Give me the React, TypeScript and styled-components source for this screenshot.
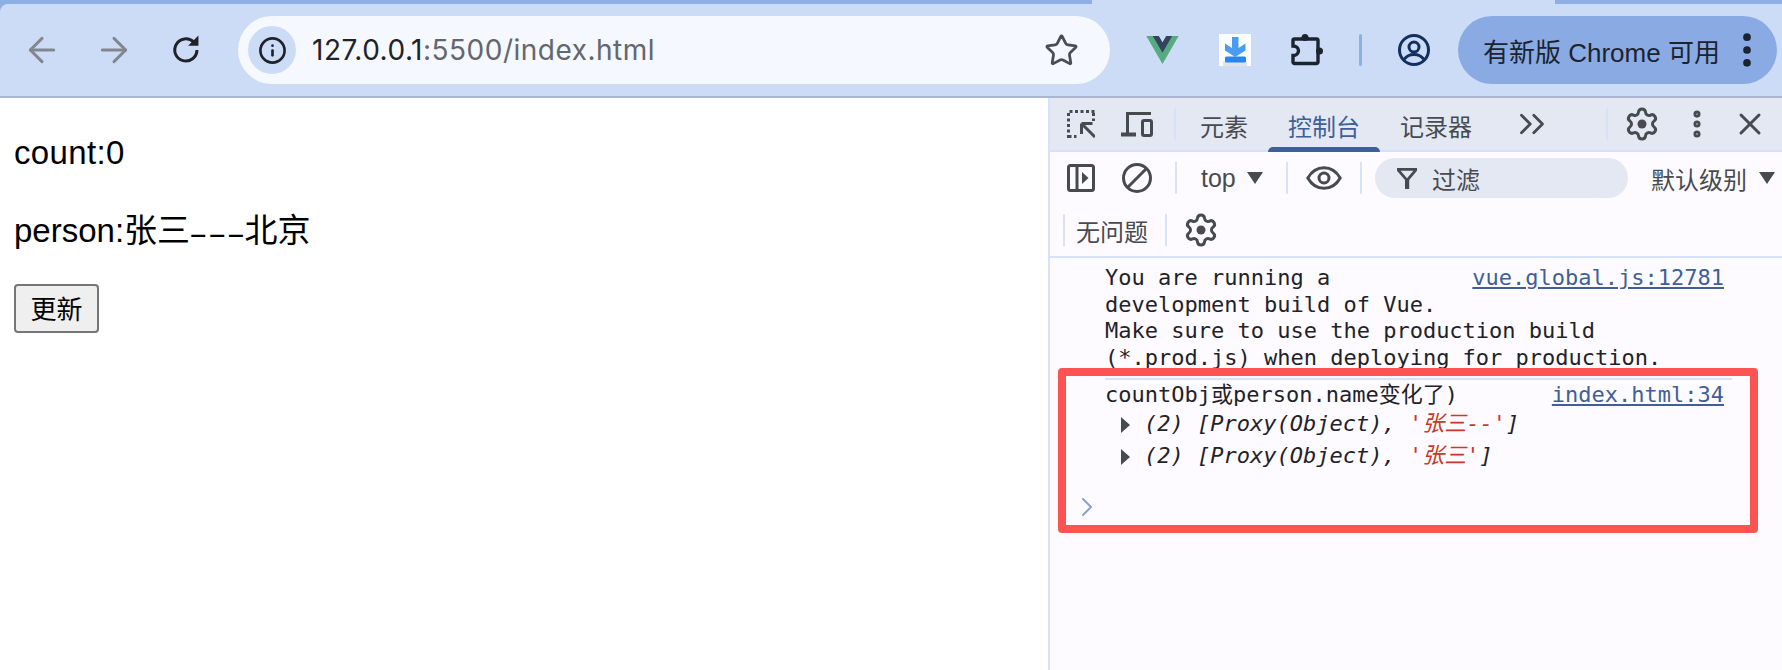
import React from "react";
import styled, { createGlobalStyle } from "styled-components";
import { ArrowLeft, ArrowRight, Star, Info, X, ChevronsRight, ChevronRight, EllipsisVertical } from "lucide-react";

const CJK = `"Noto Sans CJK SC"`;
const UI = `"Liberation Sans", ${CJK}, sans-serif`;
const MONO = `"DejaVu Sans Mono", ${CJK}, monospace`;

const Global = createGlobalStyle`
  html, body { margin: 0; padding: 0; background: #fff; }
  body { width: 1782px; height: 670px; overflow: hidden; font-family: ${UI}; }
  p { margin: 0; }
`;

const Page = styled.div`
  width: 1782px;
  height: 670px;
  display: flex;
  flex-direction: column;
`;
const Chrome = styled.div`
  background: #8eaee6;
  flex: none;
`;
const TabStrip = styled.div`
  height: 4px;
  display: flex;
  justify-content: space-between;
  background: linear-gradient(#cddcf6, #cddcf6) no-repeat 1092px 0 / 463px 4px;
`;
const StripPiece = styled.div<{ $w: number; $side: "l" | "r" }>`
  width: ${(p) => p.$w}px;
  background: #8eaee6;
  border-radius: ${(p) => (p.$side === "l" ? "0 0 6px 0" : "0 0 0 6px")};
`;
const Toolbar = styled.div`
  height: 94px;
  box-sizing: border-box;
  display: flex;
  align-items: center;
  background: #cddcf6;
  border-bottom: 2px solid #a9b6d0;
  border-radius: 8px 0 0 0;
  padding-left: 6px;
`;
const NavSlot = styled.div<{ $w?: number; $c?: string }>`
  width: ${(p) => p.$w ?? 72}px;
  height: 68px;
  flex: none;
  display: flex;
  align-items: center;
  justify-content: center;
  color: ${(p) => p.$c ?? "#1f2329"};
`;
const AddressBar = styled.div`
  width: 872px;
  height: 68px;
  margin-left: 16px;
  flex: none;
  box-sizing: border-box;
  padding: 0 31px 0 10px;
  display: flex;
  align-items: center;
  background: #f5f8fe;
  border-radius: 34px;
`;
const InfoChip = styled.div`
  width: 48px;
  height: 48px;
  border-radius: 50%;
  background: #cddcf6;
  display: flex;
  align-items: center;
  justify-content: center;
  color: #1f2329;
  flex: none;
`;
const Url = styled.div`
  margin-left: 16px;
  flex: 1;
  font-family: "Inter", "Liberation Sans", sans-serif;
  font-size: 28px;
  letter-spacing: 0.5px;
  color: #63676d;
  white-space: nowrap;
`;
const UrlHost = styled.span`
  color: #1f2329;
`;
const StarIcon = styled(Star)`
  color: #4a4d52;
  flex: none;
`;
const ToolbarDivider = styled.div`
  width: 3px;
  height: 32px;
  margin: 0 36px 0 16px;
  background: #8eaee6;
  border-radius: 2px;
  flex: none;
`;
const UpdatePill = styled.div`
  margin-left: 28px;
  width: 319px;
  height: 68px;
  flex: none;
  box-sizing: border-box;
  padding: 0 8px 0 25px;
  display: flex;
  align-items: center;
  justify-content: space-between;
  background: #8aaae4;
  border-radius: 34px;
  color: #1b2330;
  font-size: 26px;
  white-space: nowrap;
`;
const PillDots = styled(EllipsisVertical)`
  color: #1b2330;
  flex: none;
`;

const Body = styled.div`
  flex: 1;
  display: flex;
  min-height: 0;
`;
const Viewport = styled.div`
  width: 1048px;
  flex: none;
  box-sizing: border-box;
  padding: 35px 14px 0;
  display: flex;
  flex-direction: column;
  align-items: flex-start;
  color: #000;
  font-size: 33px;
`;
const Para = styled.p<{ $ls?: number }>`
  height: 40px;
  line-height: 40px;
  margin-bottom: 38px;
  white-space: nowrap;
  letter-spacing: ${(p) => p.$ls ?? 0}px;
`;
const Dashes = styled.span`
  display: inline-block;
  height: 40px;
  vertical-align: top;
  font-family: ${CJK}, sans-serif;
  margin: 0 10px;
  transform: scaleX(1.65);
`;
const PageButton = styled.button`
  width: 85px;
  height: 49px;
  margin-top: -5px;
  padding: 0 0 2px;
  box-sizing: border-box;
  background: #efefef;
  border: 2px solid #767676;
  border-radius: 4px;
  color: #000;
  font-family: ${UI};
  font-size: 26px;
`;

const DevTools = styled.div`
  position: relative;
  flex: 1;
  display: flex;
  flex-direction: column;
  background: #fdfbff;
  border-left: 2px solid #d5e2fa;
  color: #474b50;
`;
const TabsBar = styled.div`
  height: 52px;
  flex: none;
  display: flex;
  align-items: center;
  padding-left: 3px;
  background: #e4e8f2;
  border-bottom: 2px solid #d5e2fa;
`;
const Slot = styled.div<{ $w?: number }>`
  width: ${(p) => p.$w ?? 56}px;
  height: 100%;
  flex: none;
  display: flex;
  align-items: center;
  justify-content: center;
  color: #474b50;
`;
const Divider = styled.div<{ $ml?: number; $mr?: number }>`
  width: 2px;
  height: 32px;
  flex: none;
  background: #d5e2fa;
  margin-left: ${(p) => p.$ml ?? 0}px;
  margin-right: ${(p) => p.$mr ?? 0}px;
`;
const Tab = styled.div<{ $active?: boolean }>`
  position: relative;
  height: 100%;
  flex: none;
  box-sizing: border-box;
  padding: 3px 20px 0;
  display: flex;
  align-items: center;
  font-size: 24px;
  color: ${(p) => (p.$active ? "#3f5f98" : "#474b50")};
  &::after {
    content: "";
    display: ${(p) => (p.$active ? "block" : "none")};
    position: absolute;
    left: 0;
    right: 0;
    bottom: -2px;
    height: 5px;
    background: #3f5f98;
    border-radius: 5px 5px 0 0;
  }
`;
const Row = styled.div`
  height: 52px;
  flex: none;
  display: flex;
  align-items: center;
  padding-left: 3px;
`;
const IssueRow = styled(Row)`
  padding-left: 13px;
  border-bottom: 2px solid #d5e2fa;
`;
const ContextLabel = styled.div`
  width: 84px;
  margin-left: 24px;
  font-size: 25px;
  display: flex;
  align-items: center;
  flex: none;
`;
const Caret = styled.span<{ $ml: number }>`
  width: 0;
  height: 0;
  flex: none;
  margin-left: ${(p) => p.$ml}px;
  border-left: 8px solid transparent;
  border-right: 8px solid transparent;
  border-top: 12px solid #474b50;
`;
const FilterBox = styled.div`
  width: 253px;
  height: 40px;
  flex: none;
  margin-left: 13px;
  box-sizing: border-box;
  padding-left: 22px;
  display: flex;
  align-items: center;
  background: #e4e8f2;
  border-radius: 20px;
  font-size: 24px;
`;
const FilterText = styled.span`
  margin-left: 15px;
`;
const LevelLabel = styled.div`
  margin-left: 23px;
  font-size: 24px;
  white-space: nowrap;
  flex: none;
  display: flex;
  align-items: center;
`;
const IssueText = styled.div`
  width: 100px;
  flex: none;
  padding-left: 11px;
  box-sizing: border-box;
  font-size: 24px;
`;

const Messages = styled.div`
  flex: 1;
  display: flex;
  flex-direction: column;
  padding-left: 55px;
  font-family: ${MONO};
  font-size: 22px;
  line-height: 26.5px;
  color: #1f2329;
`;
const Message = styled.div`
  margin-right: 50px;
  padding: 7px 8px 0 0;
`;
const LogMessage = styled(Message)`
  margin-top: 7px;
  padding-top: 2px;
  border-top: 2px solid #d5e2fa;
`;
const SourceLink = styled.a`
  float: right;
  color: #3f5f98;
  text-decoration: underline;
`;
const TreeLine = styled.div<{ $mt: number }>`
  display: flex;
  align-items: center;
  height: 26px;
  margin-top: ${(p) => p.$mt}px;
  padding-left: 16px;
  font-style: italic;
  white-space: nowrap;
`;
const Disclosure = styled.span`
  width: 0;
  height: 0;
  margin-right: 14px;
  border-top: 8px solid transparent;
  border-bottom: 8px solid transparent;
  border-left: 9px solid #474b50;
  flex: none;
`;
const Str = styled.span`
  color: #c8382b;
`;
const Prompt = styled.div`
  margin: 21px 0 0 -34px;
  height: 32px;
  color: #8aa0cf;
  display: flex;
  align-items: center;
`;
const Highlight = styled.div`
  position: absolute;
  left: 8px;
  top: 270px;
  width: 700px;
  height: 165px;
  box-sizing: border-box;
  border: 8px solid #fd5353;
  border-radius: 4px;
  pointer-events: none;
`;

const Gear = () => (
  <svg width="36" height="36" viewBox="0 0 24 24" fill="none" stroke="#474b50" strokeWidth="2" strokeLinecap="round" strokeLinejoin="round">
    <path d="M9.67 4.14a2.34 2.34 0 0 1 4.66 0 2.34 2.34 0 0 0 3.32 1.91 2.34 2.34 0 0 1 2.33 4.04 2.34 2.34 0 0 0 0 3.82 2.34 2.34 0 0 1-2.33 4.04 2.34 2.34 0 0 0-3.32 1.91 2.34 2.34 0 0 1-4.66 0 2.34 2.34 0 0 0-3.32-1.91 2.34 2.34 0 0 1-2.33-4.04 2.34 2.34 0 0 0 0-3.82 2.34 2.34 0 0 1 2.33-4.04 2.34 2.34 0 0 0 3.32-1.91z" />
    <circle cx="12" cy="12" r="3" fill="#474b50" stroke="none" />
  </svg>
);

const Reload = () => (
  <svg width="36" height="36" viewBox="0 0 24 24" fill="none">
    <path d="M19.300 12a7.400 7.400 0 1 1-2.200-5.300" stroke="#1f2329" strokeWidth="2" />
    <path d="M13.400 9.200H20.300V2.300z" fill="#1f2329" />
  </svg>
);

const Inspect = () => (
  <svg width="28" height="28" viewBox="0 0 28 28" fill="none" stroke="#474b50" strokeWidth="3">
    <path d="M1.500 28V1.500H28" strokeDasharray="3 2.500" />
    <path d="M26.500 3v8" strokeDasharray="3 2.500" />
    <path d="M1.500 26.500h8" strokeDasharray="3 2.500" />
    <path d="M14.500 13.500h11M14.500 13.500v10.500M15 14L28 27" fill="none" />
  </svg>
);

const Device = () => (
  <svg width="32" height="25" viewBox="0 0 32 25" fill="none" stroke="#474b50" strokeWidth="3">
    <path d="M6.500 23V1.500H30" />
    <path d="M0 22.500h15" strokeWidth="4" />
    <rect x="21.500" y="8.500" width="9" height="15" rx="1.500" />
  </svg>
);

const SidebarToggle = () => (
  <svg width="28" height="28" viewBox="0 0 28 28" fill="none">
    <rect x="1.500" y="1.500" width="25" height="25" rx="2" stroke="#474b50" strokeWidth="3" />
    <path d="M10 2v24" stroke="#474b50" strokeWidth="3" />
    <path d="M15 8l6.500 6-6.500 6z" fill="#474b50" />
  </svg>
);

const Ban = () => (
  <svg width="30" height="30" viewBox="0 0 30 30" fill="none" stroke="#474b50" strokeWidth="3">
    <circle cx="15" cy="15" r="13.500" />
    <path d="M24.500 5.500L5.500 24.500" />
  </svg>
);

const EyeIcon = () => (
  <svg width="36" height="24" viewBox="0 0 36 24" fill="none" stroke="#474b50" strokeWidth="3">
    <path d="M1.800 12C5.500 5.500 11.500 1.700 18 1.700S30.500 5.500 34.200 12C30.500 18.500 24.500 22.300 18 22.300S5.500 18.500 1.800 12z" />
    <circle cx="18" cy="12" r="5" />
  </svg>
);

const Funnel = () => (
  <svg width="20" height="21" viewBox="0 0 20 21" fill="#474b50">
    <path d="M0 0h20v2.800l-7.800 9.200V21H8v-9L0 2.800zM3.600 2.800l6.400 7.400 6.400-7.400z" fillRule="evenodd" />
  </svg>
);

const VueLogo = () => (
  <svg width="33" height="28" viewBox="0 0 261.76 226.69">
    <path d="M161.096.001l-30.225 52.351L100.647.001H-.005l130.877 226.688L261.749.001z" fill="#56ab80" />
    <path d="M161.096.001l-30.225 52.351L100.647.001H52.346l78.526 136.01L209.398.001z" fill="#34435e" />
  </svg>
);

const DownloadExt = () => (
  <svg width="32" height="32" viewBox="0 0 32 32">
    <rect width="32" height="32" fill="#fbfcfe" />
    <rect x="4" y="27" width="24" height="5" fill="#dfe2e6" />
    <path d="M13 3h6.500v11L26.500 9.500v7L16.200 23 6 16.500v-7l7 4.500z" fill="#4a9cf0" />
    <rect x="6" y="22.500" width="21" height="6" rx="1.500" fill="#2a86e8" />
  </svg>
);

const Extensions = () => (
  <svg width="32" height="32" viewBox="0 0 32 32">
    <path
      d="M3.500 5H25.500a1.500 1.500 0 0 1 1.500 1.500V28a1.500 1.500 0 0 1-1.500 1.500H3.500a1.500 1.500 0 0 1-1.500-1.500V21.500c3.500 0 5.500-2.300 5.500-4.800S5.500 12 2 12V6.500A1.500 1.500 0 0 1 3.500 5z"
      fill="none"
      stroke="#1b2330"
      strokeWidth="3.400"
    />
    <circle cx="14" cy="3.500" r="3.500" fill="#1b2330" />
    <circle cx="28.500" cy="17" r="3.500" fill="#1b2330" />
  </svg>
);

const Profile = () => (
  <svg width="32" height="32" viewBox="0 0 32 32" fill="none" stroke="#12305f" strokeWidth="3">
    <circle cx="16" cy="16" r="14.500" />
    <circle cx="16" cy="13" r="5" />
    <path d="M6 25.500c2.500-3.500 6-5 10-5s7.500 1.500 10 5" />
  </svg>
);

export default function App() {
  return (
    <Page>
      <Global />
      <Chrome>
        <TabStrip>
          <StripPiece $w={1092} $side="l" />
          <StripPiece $w={227} $side="r" />
        </TabStrip>
        <Toolbar>
          <NavSlot $c="#82878f"><ArrowLeft size={40} strokeWidth={1.8} /></NavSlot>
          <NavSlot $c="#82878f"><ArrowRight size={40} strokeWidth={1.8} /></NavSlot>
          <NavSlot><Reload /></NavSlot>
          <AddressBar>
            <InfoChip><Info size={29} strokeWidth={2.2} /></InfoChip>
            <Url><UrlHost>127.0.0.1</UrlHost>:5500/index.html</Url>
            <StarIcon size={35} strokeWidth={1.9} />
          </AddressBar>
          <NavSlot $w={15} />
          <NavSlot $w={74}><VueLogo /></NavSlot>
          <NavSlot $w={71}><DownloadExt /></NavSlot>
          <NavSlot $w={73}><Extensions /></NavSlot>
          <ToolbarDivider />
          <NavSlot $w={32}><Profile /></NavSlot>
          <UpdatePill>
            有新版 Chrome 可用
            <PillDots size={44} strokeWidth={2.2} />
          </UpdatePill>
        </Toolbar>
      </Chrome>
      <Body>
        <Viewport>
          <Para $ls={0.35}>count:0</Para>
          <Para>person:张三<Dashes>---</Dashes>北京</Para>
          <PageButton>更新</PageButton>
        </Viewport>
        <DevTools>
          <TabsBar>
            <Slot><Inspect /></Slot>
            <Slot><Device /></Slot>
            <Divider $ml={9} $mr={4} />
            <Tab>元素</Tab>
            <Tab $active>控制台</Tab>
            <Tab>记录器</Tab>
            <Slot $w={80}><ChevronsRight size={42} strokeWidth={1.6} /></Slot>
            <Slot $w={34} />
            <Divider />
            <Slot $w={68}><Gear /></Slot>
            <Slot $w={42}><EllipsisVertical size={34} strokeWidth={3} /></Slot>
            <Slot $w={64}><X size={36} strokeWidth={2} /></Slot>
          </TabsBar>
          <Row>
            <Slot><SidebarToggle /></Slot>
            <Slot><Ban /></Slot>
            <Divider $ml={10} />
            <ContextLabel>top<Caret $ml={11} /></ContextLabel>
            <Divider $ml={1} />
            <Slot $w={72}><EyeIcon /></Slot>
            <Divider />
            <FilterBox><Funnel /><FilterText>过滤</FilterText></FilterBox>
            <LevelLabel>默认级别<Caret $ml={12} /></LevelLabel>
          </Row>
          <IssueRow>
            <Divider />
            <IssueText>无问题</IssueText>
            <Divider />
            <Slot $w={68}><Gear /></Slot>
          </IssueRow>
          <Messages>
            <Message>
              <SourceLink>vue.global.js:12781</SourceLink>
              You are running a<br />
              development build of Vue.<br />
              Make sure to use the production build<br />
              (*.prod.js) when deploying for production.
            </Message>
            <LogMessage>
              <SourceLink>index.html:34</SourceLink>
              countObj或person.name变化了)
              <TreeLine $mt={3}><Disclosure />(2) [Proxy(Object), <Str>&nbsp;'张三--'</Str>]</TreeLine>
              <TreeLine $mt={6}><Disclosure />(2) [Proxy(Object), <Str>&nbsp;'张三'</Str>]</TreeLine>
            </LogMessage>
            <Prompt><ChevronRight size={32} strokeWidth={1.5} /></Prompt>
          </Messages>
          <Highlight />
        </DevTools>
      </Body>
    </Page>
  );
}
